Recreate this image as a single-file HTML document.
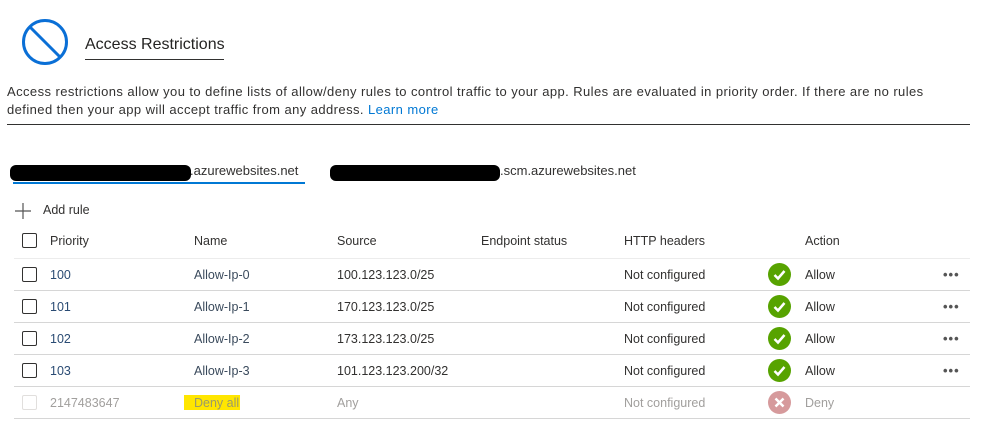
<!DOCTYPE html>
<html><head><meta charset="utf-8"><style>
body{margin:0;width:983px;height:436px;background:#fff;font-family:"Liberation Sans",sans-serif;font-size:12.5px;color:#323130;position:relative;overflow:hidden}
.a{position:absolute;white-space:nowrap}
.cb{position:absolute;width:15px;height:15px;border:1px solid #323130;border-radius:2px;box-sizing:border-box}
.ln{position:absolute;left:14px;width:956px;height:1px;background:#d6d6d6}
.pr{color:#2a4b73}
.nm{color:#3a4a5c}
.ok{position:absolute;width:23px;height:23px;border-radius:50%;background:#57a300}
.dots{position:absolute;font-size:13px;letter-spacing:1px;color:#555;font-weight:bold}
.dis{color:#a19f9d}
</style></head><body>
<svg class="a" style="left:21px;top:18px" width="50" height="50"><circle cx="24" cy="24" r="21.5" fill="none" stroke="#0a6fd6" stroke-width="3"/><line x1="9" y1="9" x2="39" y2="39" stroke="#0a6fd6" stroke-width="3"/></svg>
<div class="a" style="left:85px;top:36px;font-size:16px;color:#252423">Access Restrictions</div>
<div class="a" style="left:85px;top:59px;width:139px;height:1px;background:#323130"></div>
<div class="a" style="left:7px;top:83px;font-size:13px;line-height:18px;letter-spacing:0.42px">Access restrictions allow you to define lists of allow/deny rules to control traffic to your app. Rules are evaluated in priority order. If there are no rules<br>defined then your app will accept traffic from any address. <span style="color:#0078d4">Learn more</span></div>
<div class="a" style="left:7px;top:124px;width:963px;height:1px;background:#323130"></div>
<div class="a" style="left:10px;top:165px;width:181px;height:16px;background:#000;border-radius:6px"></div>
<div class="a" style="left:190px;top:163px;font-size:13px">.azurewebsites.net</div>
<div class="a" style="left:13px;top:182px;width:292px;height:2px;background:#0078d4"></div>
<div class="a" style="left:330px;top:165px;width:170px;height:16px;background:#000;border-radius:6px"></div>
<div class="a" style="left:500px;top:163px;font-size:13px">.scm.azurewebsites.net</div>
<svg class="a" style="left:14px;top:202px" width="18" height="18"><path d="M9 1V17M1 9H17" stroke="#555" stroke-width="1.2"/></svg>
<div class="a" style="left:43px;top:203px">Add rule</div>
<div class="cb" style="left:22px;top:233px"></div>
<div class="a" style="left:50px;top:234px">Priority</div>
<div class="a" style="left:194px;top:234px">Name</div>
<div class="a" style="left:337px;top:234px">Source</div>
<div class="a" style="left:481px;top:234px">Endpoint status</div>
<div class="a" style="left:624px;top:234px">HTTP headers</div>
<div class="a" style="left:805px;top:234px">Action</div>
<div class="ln" style="top:258px;background:#ececec"></div>

<div class="cb" style="left:22px;top:267px"></div><div class="a pr" style="left:50px;top:268px">100</div><div class="a nm" style="left:194px;top:268px">Allow-Ip-0</div><div class="a" style="left:337px;top:268px">100.123.123.0/25</div><div class="a" style="left:624px;top:268px">Not configured</div><div class="ok" style="left:768px;top:263px"></div><svg class="a" style="left:768px;top:263px" width="23" height="23"><path d="M6.5 12 L10 15.5 L16.5 8" fill="none" stroke="#fff" stroke-width="2.5"/></svg><div class="a" style="left:805px;top:268px">Allow</div><div class="dots" style="left:943px;top:267px">•••</div>
<div class="ln" style="top:290px"></div>

<div class="cb" style="left:22px;top:299px"></div><div class="a pr" style="left:50px;top:300px">101</div><div class="a nm" style="left:194px;top:300px">Allow-Ip-1</div><div class="a" style="left:337px;top:300px">170.123.123.0/25</div><div class="a" style="left:624px;top:300px">Not configured</div><div class="ok" style="left:768px;top:295px"></div><svg class="a" style="left:768px;top:295px" width="23" height="23"><path d="M6.5 12 L10 15.5 L16.5 8" fill="none" stroke="#fff" stroke-width="2.5"/></svg><div class="a" style="left:805px;top:300px">Allow</div><div class="dots" style="left:943px;top:299px">•••</div>
<div class="ln" style="top:322px"></div>

<div class="cb" style="left:22px;top:331px"></div><div class="a pr" style="left:50px;top:332px">102</div><div class="a nm" style="left:194px;top:332px">Allow-Ip-2</div><div class="a" style="left:337px;top:332px">173.123.123.0/25</div><div class="a" style="left:624px;top:332px">Not configured</div><div class="ok" style="left:768px;top:327px"></div><svg class="a" style="left:768px;top:327px" width="23" height="23"><path d="M6.5 12 L10 15.5 L16.5 8" fill="none" stroke="#fff" stroke-width="2.5"/></svg><div class="a" style="left:805px;top:332px">Allow</div><div class="dots" style="left:943px;top:331px">•••</div>
<div class="ln" style="top:354px"></div>

<div class="cb" style="left:22px;top:363px"></div><div class="a pr" style="left:50px;top:364px">103</div><div class="a nm" style="left:194px;top:364px">Allow-Ip-3</div><div class="a" style="left:337px;top:364px">101.123.123.200/32</div><div class="a" style="left:624px;top:364px">Not configured</div><div class="ok" style="left:768px;top:359px"></div><svg class="a" style="left:768px;top:359px" width="23" height="23"><path d="M6.5 12 L10 15.5 L16.5 8" fill="none" stroke="#fff" stroke-width="2.5"/></svg><div class="a" style="left:805px;top:364px">Allow</div><div class="dots" style="left:943px;top:363px">•••</div>
<div class="ln" style="top:386px"></div>

<div class="cb" style="left:22px;top:395px;border-color:#e1dfdd"></div><div class="a dis" style="left:50px;top:396px">2147483647</div>
<div class="a" style="left:184px;top:395px;width:56px;height:15px;background:#ffe600"></div><div class="a dis" style="left:194px;top:396px;color:#9a9a6a">Deny all</div>
<div class="a dis" style="left:337px;top:396px">Any</div><div class="a dis" style="left:624px;top:396px">Not configured</div>
<div class="ok" style="left:768px;top:391px;background:#d69a9c"></div><svg class="a" style="left:768px;top:391px" width="23" height="23"><path d="M7.5 7.5 L15.5 15.5 M15.5 7.5 L7.5 15.5" stroke="#fff" stroke-width="2.5"/></svg>
<div class="a dis" style="left:805px;top:396px">Deny</div>
<div class="ln" style="top:418px"></div>
</body></html>
